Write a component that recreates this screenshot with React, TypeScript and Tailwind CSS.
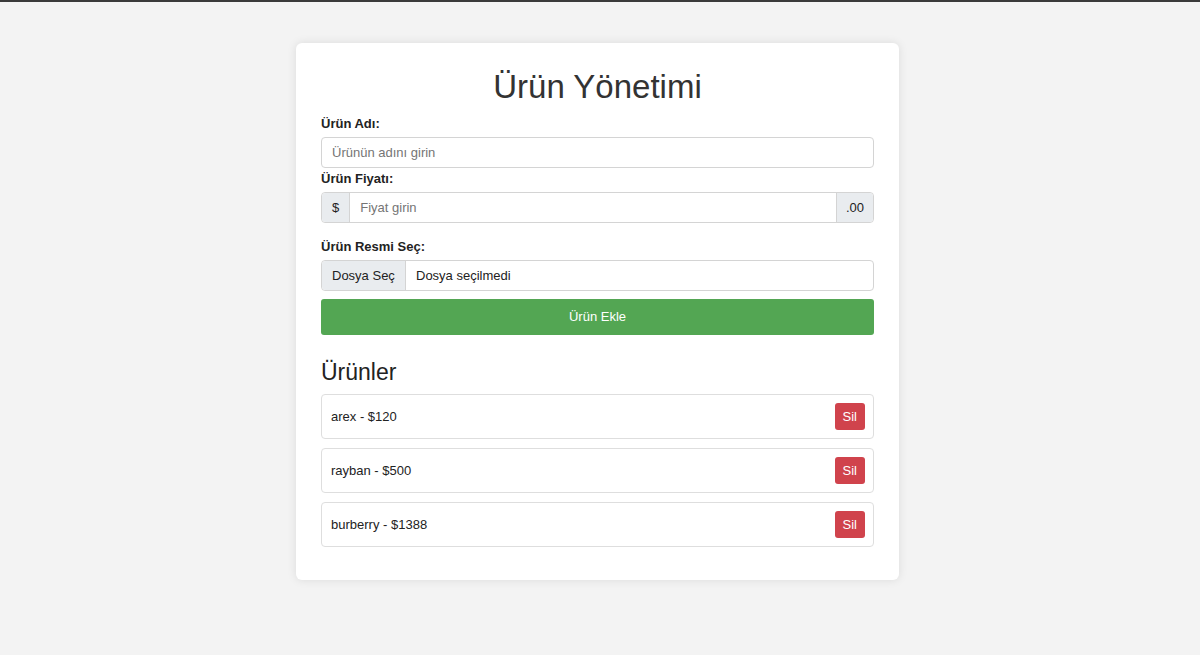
import { useState } from "react";

type Urun = { ad: string; fiyat: number };

export default function App() {
  const [urunler, setUrunler] = useState<Urun[]>([
    { ad: "arex", fiyat: 120 },
    { ad: "rayban", fiyat: 500 },
    { ad: "burberry", fiyat: 1388 },
  ]);

  const sil = (i: number) => setUrunler(urunler.filter((_, idx) => idx !== i));

  return (
    <div className="min-h-screen bg-[#f3f3f3] font-['Liberation_Sans',Arial,sans-serif] text-[#222]">
      <div className="h-[2px] bg-[#3a3a3a]" />
      <div className="flex justify-center pt-[41px] pr-[5px]">
        <div className="w-[603px] bg-white rounded-[6px] shadow-[0_0_10px_rgba(0,0,0,0.1)] px-[25px] pt-[25px] pb-[33px]">
          <h1 className="text-center text-[33px] leading-[37px] text-[#333]">Ürün Yönetimi</h1>

          <label className="block mt-[11px] text-[13px] leading-[16px] font-bold">Ürün Adı:</label>
          <input
            className="mt-[5px] block w-full h-[31px] px-[10px] text-[13px] border border-[#d4d4d4] rounded-[4px] placeholder:text-[#757575] outline-none"
            placeholder="Ürünün adını girin"
          />

          <label className="block mt-[3px] text-[13px] leading-[16px] font-bold">Ürün Fiyatı:</label>
          <div className="mt-[5px] flex h-[31px] border border-[#d4d4d4] rounded-[4px] text-[13px]">
            <span className="flex items-center px-[10px] bg-[#e9ecef] border-r border-[#d4d4d4] rounded-l-[4px]">$</span>
            <input className="flex-1 px-[10px] placeholder:text-[#757575] outline-none" placeholder="Fiyat girin" />
            <span className="flex items-center px-[9px] bg-[#e9ecef] border-l border-[#d4d4d4] rounded-r-[4px]">.00</span>
          </div>

          <label className="block mt-[16px] text-[13px] leading-[16px] font-bold">Ürün Resmi Seç:</label>
          <div className="mt-[5px] flex h-[31px] border border-[#d4d4d4] rounded-[4px] text-[13px]">
            <span className="flex items-center w-[84px] px-[10px] bg-[#e9ecef] border-r border-[#d4d4d4] rounded-l-[4px]">Dosya Seç</span>
            <span className="flex items-center px-[10px]">Dosya seçilmedi</span>
          </div>

          <button className="mt-[8px] w-full h-[36px] bg-[#53a653] text-white text-[13px] rounded-[3px]">Ürün Ekle</button>

          <h2 className="mt-[24px] text-[23px] leading-[27px]">Ürünler</h2>
          <ul className="mt-[8px] flex flex-col gap-[9px]">
            {urunler.map((u, i) => (
              <li
                key={u.ad}
                className="flex items-center justify-between h-[45px] pl-[9px] pr-[8px] border border-[#dedede] rounded-[4px] text-[13px]"
              >
                <span>
                  {u.ad} - ${u.fiyat}
                </span>
                <button
                  onClick={() => sil(i)}
                  className="h-[27px] px-[8px] bg-[#d0434c] text-white text-[13px] rounded-[3px]"
                >
                  Sil
                </button>
              </li>
            ))}
          </ul>
        </div>
      </div>
    </div>
  );
}
